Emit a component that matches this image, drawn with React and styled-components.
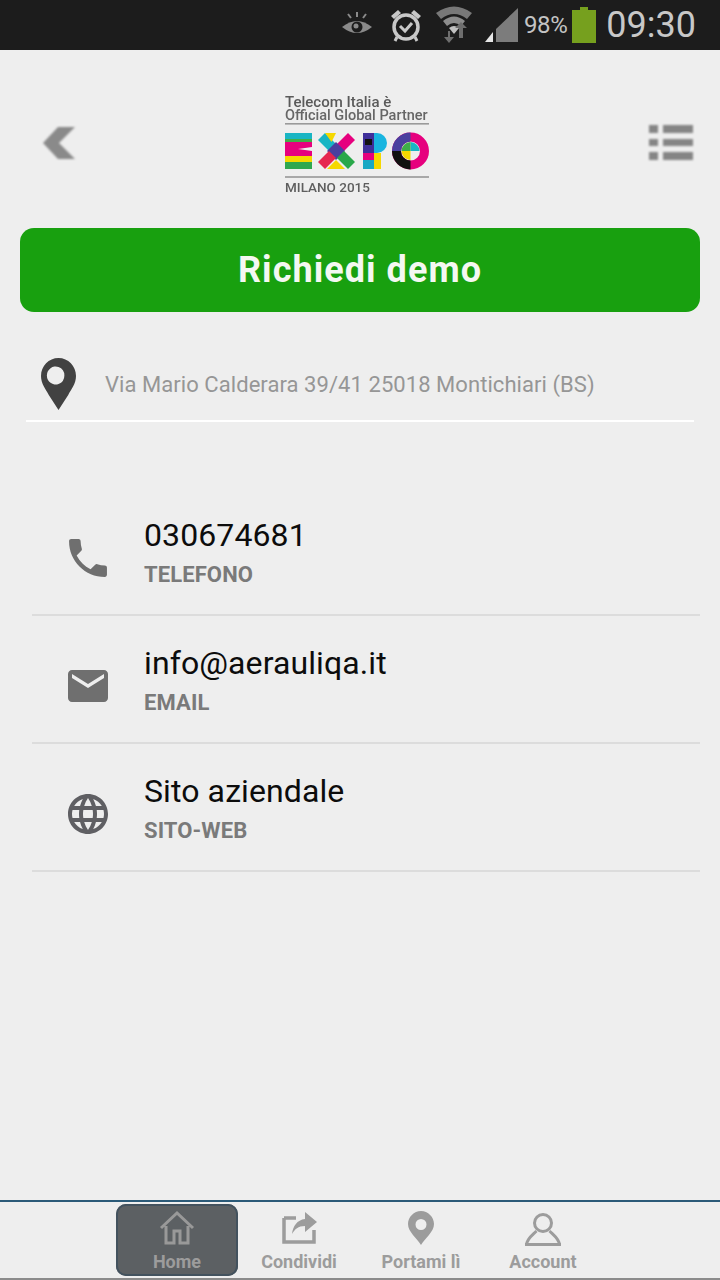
import React from "react";
import styled, { createGlobalStyle } from "styled-components";

const Global = createGlobalStyle`
  html, body { margin: 0; padding: 0; background: #eeeeee; }
  body { font-family: Roboto, "Noto Sans", sans-serif; }
`;

const Page = styled.div`
  width: 720px;
  height: 1280px;
  display: flex;
  flex-direction: column;
  background: #eeeeee;
  overflow: hidden;
`;

const StatusBar = styled.div`
  height: 50px;
  flex: none;
  background: #1c1c1c;
  display: flex;
  align-items: center;
  justify-content: flex-end;
  padding-right: 24px;
  box-sizing: border-box;
`;

const StatusIcon = styled.svg`
  display: block;
  flex: none;
  margin-right: ${(p) => p.$gap || 0}px;
`;

const Percent = styled.span`
  font-size: 24px;
  color: #c4c4c4;
  margin-right: 5px;
  letter-spacing: -0.4px;
`;

const Clock = styled.span`
  font-size: 36px;
  font-weight: 400;
  color: #c8c8c8;
  margin-left: 10px;
  line-height: 50px;
`;

const Header = styled.header`
  height: 178px;
  flex: none;
  box-sizing: border-box;
  display: flex;
  align-items: center;
  justify-content: space-between;
  padding: 8px 26px 0 42px;
`;

const Logo = styled.svg`
  display: block;
  filter: blur(0.7px);
  margin-right: 8px;
`;

const BlurIcon = styled.svg`
  display: block;
  filter: blur(1px);
`;

const DemoButton = styled.button`
  display: block;
  flex: none;
  margin: 0 20px;
  width: 680px;
  height: 84px;
  border: 0;
  border-radius: 14px;
  background: #18a00f;
  color: #f4f8f2;
  font-family: Roboto, sans-serif;
  font-weight: 700;
  font-size: 36px;
  letter-spacing: 1.05px;
`;

const Address = styled.div`
  flex: none;
  margin: 0 26px;
  height: 110px;
  box-sizing: border-box;
  border-bottom: 2px solid #ffffff;
  display: flex;
  align-items: center;
  gap: 29px;
  padding: 35px 0 0 15px;
`;

const PinIcon = styled.svg`
  display: block;
  flex: none;
`;

const AddressText = styled.span`
  font-size: 22px;
  color: #969696;
  letter-spacing: 0.06px;
  padding-top: 2px;
`;

const ContactList = styled.div`
  flex: none;
  margin: 66px 20px 0 32px;
  display: flex;
  flex-direction: column;
`;

const ContactRow = styled.div`
  height: 128px;
  box-sizing: border-box;
  border-bottom: 2px solid #dcdcdc;
  display: flex;
  align-items: center;
  padding: 0 0 0 36px;
`;

const ContactIcon = styled.svg`
  display: block;
  flex: none;
  margin: 14px 36px 0 0;
`;

const ContactText = styled.div`
  display: flex;
  flex-direction: column;
  gap: 8px;
  margin-top: 1px;
`;

const ContactValue = styled.span`
  font-size: 32px;
  line-height: 38px;
  color: #0c0c0c;
  letter-spacing: 0.1px;
`;

const ContactLabel = styled.span`
  font-size: 22px;
  line-height: 26px;
  font-weight: 700;
  color: #7a7a7a;
  letter-spacing: 0.1px;
`;

const Spacer = styled.div`
  flex: 1;
`;

const BottomNav = styled.nav`
  flex: none;
  height: 80px;
  box-sizing: border-box;
  border-top: 2px solid #2b5a78;
  border-bottom: 2px solid #8b8b8b;
  display: flex;
  align-items: center;
  padding-left: 116px;
`;

const NavItem = styled.div`
  width: 122px;
  height: 72px;
  box-sizing: border-box;
  display: flex;
  flex-direction: column;
  align-items: center;
  border-radius: 10px;
  padding-top: 6px;
  background: ${(p) => (p.$active ? "#5c6063" : "transparent")};
  box-shadow: ${(p) => (p.$active ? "inset 0 0 0 2px #43525e" : "none")};
`;

const NavIcon = styled.svg`
  display: block;
  flex: none;
`;

const NavLabel = styled.span`
  font-size: 18px;
  line-height: 22px;
  font-weight: 700;
  color: #9c9c9c;
  margin-top: 5px;
`;

const EyeIcon = () => (
  <StatusIcon $gap={17} width="32" height="26" viewBox="0 0 32 26">
    <path d="M1 15 Q16 3 31 15 Q16 27 1 15Z" fill="#8a8a8a" />
    <circle cx="16" cy="15" r="5.5" fill="#1c1c1c" />
    <circle cx="15" cy="14" r="2.5" fill="#8a8a8a" />
    <path d="M16 0v5M7 2l3 4M25 2l-3 4" stroke="#8a8a8a" strokeWidth="2" />
  </StatusIcon>
);

const AlarmIcon = () => (
  <StatusIcon $gap={14} width="32" height="36" viewBox="0 0 32 36">
    <circle cx="16" cy="20" r="12" fill="none" stroke="#c8c8c8" strokeWidth="3.5" />
    <path d="M10 19l5 5 7-8" fill="none" stroke="#c8c8c8" strokeWidth="3" />
    <path d="M1 9l7-6 3 3-7 6zM31 9l-7-6-3 3 7 6z" fill="#c8c8c8" />
    <path d="M7 30l-2 4M25 30l2 4" stroke="#c8c8c8" strokeWidth="3" />
  </StatusIcon>
);

const WifiIcon = () => (
  <StatusIcon $gap={13} width="36" height="38" viewBox="0 0 36 38">
    <path d="M0 7 Q18 -6 36 7 L31 13 Q18 3 5 13Z" fill="#787878" />
    <path d="M7 15 Q18 6 29 15 L25 20 Q18 14 11 20Z" fill="#8c8c8c" />
    <path d="M13 22 Q18 18 23 22 L18 28Z" fill="#c0c0c0" />
    <path d="M12 25v6h-4l5 6 5-6h-4v-6z" fill="#6e6e6e" />
    <path d="M23 32v-10h-4l6-6 6 6h-4v10z" fill="#6e6e6e" />
  </StatusIcon>
);

const SignalIcon = () => (
  <StatusIcon $gap={5} width="34" height="34" viewBox="0 0 34 34">
    <path d="M11 21L33 0v34H11z" fill="#7c7c7c" />
    <path d="M8 24v10H0z" fill="#e6e6e6" />
  </StatusIcon>
);

const BatteryIcon = () => (
  <StatusIcon width="24" height="36" viewBox="0 0 24 36">
    <path d="M8 0h8v3h8v33H0V3h8z" fill="#76a01e" />
  </StatusIcon>
);

const ExpoLogo = () => (
  <Logo width="150" height="104" viewBox="283 92 150 104">
    <text x="285" y="107.500" fontFamily="Roboto" fontSize="15" fontWeight="500" fill="#5a5a5a">Telecom Italia è</text>
    <text x="285" y="121" fontFamily="Roboto" fontSize="14.5" fontWeight="500" fill="#666666">Official Global Partner</text>
    <rect x="285" y="124" width="144" height="1.6" fill="#9a9a9a" />
    <rect x="285" y="134" width="27" height="6" fill="#19b5c4" />
    <rect x="285" y="140" width="27" height="3" fill="#3fae49" />
    <path d="M285 143h27v5l-14 2 14 2v5h-27z" fill="#e6007e" />
    <rect x="285" y="157" width="27" height="6" fill="#f5d800" />
    <rect x="285" y="163" width="27" height="7" fill="#2fa84f" />
    <path d="M318 141l7-7 11 11-7 7z" fill="#19b5c4" />
    <path d="M355 141l-7-7-11 11 7 7z" fill="#e6007e" />
    <path d="M325 134h11l-4.500 9z" fill="#f5d800" />
    <path d="M336 143l9 9-9 9-9-9z" fill="#4a3f9f" />
    <path d="M318 163l7 7 11-11-7-7z" fill="#e6264f" />
    <path d="M355 163l-7 7-11-11 7-7z" fill="#29a84a" />
    <path d="M327 170l9-9 9 9z" fill="#f5d800" />
    <rect x="363" y="134" width="11" height="20" fill="#3f2f9a" />
    <rect x="363" y="154" width="11" height="7" fill="#e6007e" />
    <rect x="363" y="161" width="11" height="9" fill="#19a8c4" />
    <rect x="374" y="154" width="7" height="16" fill="#f5d800" />
    <path d="M374 134h3a10 10 0 0 1 0 20h-3z" fill="#19b5e0" />
    <rect x="365" y="140" width="7" height="6" fill="#111111" />
    <circle cx="410.500" cy="152" r="14" fill="none" stroke="#e6007e" strokeWidth="9" />
    <path d="M410.500 133.500a18.500 18.500 0 0 0-18.500 18.500h9a9.500 9.500 0 0 1 9.500-9.500z" fill="#4a3f9f" />
    <path d="M392 152a18.500 18.500 0 0 0 18.500 18.500v-9a9.500 9.500 0 0 1-9.500-9.500z" fill="#111111" />
    <path d="M410.500 143a9 9 0 0 1 9 9h-9z" fill="#19b5c4" />
    <path d="M401.500 152a9 9 0 0 1 9-9v9z" fill="#3fae49" />
    <path d="M410.500 161a9 9 0 0 1-9-9h9z" fill="#f5d800" />
    <rect x="285" y="177" width="144" height="2" fill="#a8a8a8" />
    <text x="285" y="192.500" fontFamily="Roboto" fontSize="13.5" fontWeight="500" fill="#5e5e5e">MILANO 2015</text>
  </Logo>
);

const rows = [
  {
    value: "030674681",
    label: "TELEFONO",
    icon: (
      <ContactIcon width="40" height="40" viewBox="2.500 2.500 19 19">
        <path d="M6.62 10.79c1.44 2.83 3.76 5.14 6.59 6.59l2.2-2.2c.27-.27.67-.36 1.02-.24 1.12.37 2.33.57 3.57.57.55 0 1 .45 1 1V20c0 .55-.45 1-1 1-9.39 0-17-7.61-17-17 0-.55.45-1 1-1h3.5c.55 0 1 .45 1 1 0 1.25.2 2.45.57 3.57.11.35.03.74-.25 1.02l-2.2 2.2z" fill="#6f6f6f" />
      </ContactIcon>
    ),
  },
  {
    value: "info@aerauliqa.it",
    label: "EMAIL",
    icon: (
      <ContactIcon width="40" height="40" viewBox="2 2 20 20">
        <path d="M20 4H4c-1.100 0-1.990.9-1.990 2L2 18c0 1.100.9 2 2 2h16c1.100 0 2-.9 2-2V6c0-1.100-.9-2-2-2zm0 4l-8 5-8-5V6l8 5 8-5v2z" fill="#6f6f6f" />
      </ContactIcon>
    ),
  },
  {
    value: "Sito aziendale",
    label: "SITO-WEB",
    icon: (
      <ContactIcon width="40" height="40" viewBox="2 2 20 20">
        <path d="M11.990 2C6.470 2 2 6.480 2 12s4.470 10 9.990 10C17.520 22 22 17.520 22 12S17.520 2 11.990 2zm6.930 6h-2.950c-.32-1.250-.78-2.450-1.380-3.560 1.840.63 3.370 1.910 4.330 3.560zM12 4.040c.83 1.200 1.480 2.530 1.910 3.960h-3.820c.43-1.430 1.080-2.760 1.910-3.960zM4.260 14C4.100 13.360 4 12.690 4 12s.1-1.360.26-2h3.380c-.08.66-.14 1.320-.14 2 0 .68.06 1.340.14 2H4.260zm.82 2h2.950c.32 1.250.78 2.450 1.380 3.560-1.840-.63-3.370-1.900-4.330-3.560zm2.950-8H5.080c.96-1.660 2.490-2.930 4.330-3.560C8.810 5.550 8.350 6.750 8.030 8zM12 19.960c-.83-1.200-1.480-2.530-1.910-3.960h3.820c-.43 1.430-1.080 2.760-1.910 3.960zM14.340 14H9.660c-.09-.66-.16-1.320-.16-2 0-.68.07-1.350.16-2h4.680c.09.65.16 1.320.16 2 0 .68-.07 1.340-.16 2zm.25 5.560c.6-1.110 1.060-2.310 1.380-3.560h2.950c-.96 1.650-2.490 2.930-4.330 3.560zM16.360 14c.08-.66.14-1.320.14-2 0-.68-.06-1.340-.14-2h3.380c.16.64.26 1.310.26 2s-.1 1.360-.26 2h-3.380z" fill="#5f5f63" />
      </ContactIcon>
    ),
  },
];

export default function App() {
  return (
    <Page>
      <Global />
      <StatusBar>
        <EyeIcon />
        <AlarmIcon />
        <WifiIcon />
        <SignalIcon />
        <Percent>98%</Percent>
        <BatteryIcon />
        <Clock>09:30</Clock>
      </StatusBar>
      <Header>
        <BlurIcon width="34" height="34" viewBox="0 0 34 34">
          <path d="M16 1h17L17 17l16 16H16L1 17z" fill="#8a8a8a" />
        </BlurIcon>
        <ExpoLogo />
        <BlurIcon width="46" height="38" viewBox="0 0 46 38">
          <path d="M1 1h9v8H1zM15 1h30v8H15zM1 15h9v7H1zM15 15h30v7H15zM1 28h9v8H1zM15 28h30v8H15z" fill="#858585" />
        </BlurIcon>
      </Header>
      <DemoButton>Richiedi demo</DemoButton>
      <Address>
        <PinIcon width="35" height="52" viewBox="0 0 36 52" preserveAspectRatio="none">
          <path fillRule="evenodd" d="M18 0c10 0 18 8 18 18 0 8-5 13-8 19L18 52 8 37C5 31 0 26 0 18 0 8 8 0 18 0zm0 9a9 9 0 1 0 0 17 9 9 0 0 0 0-17z" fill="#424242" />
        </PinIcon>
        <AddressText>Via Mario Calderara 39/41 25018 Montichiari (BS)</AddressText>
      </Address>
      <ContactList>
        {rows.map((r) => (
          <ContactRow key={r.label}>
            {r.icon}
            <ContactText>
              <ContactValue>{r.value}</ContactValue>
              <ContactLabel>{r.label}</ContactLabel>
            </ContactText>
          </ContactRow>
        ))}
      </ContactList>
      <Spacer />
      <BottomNav>
        <NavItem $active>
          <NavIcon width="36" height="36" viewBox="0 0 36 36" fill="none" stroke="#999999" strokeWidth="3">
            <path d="M2 18L18 3l16 15M7 16v17h8V21h6v12h8V16" />
          </NavIcon>
          <NavLabel>Home</NavLabel>
        </NavItem>
        <NavItem>
          <NavIcon width="36" height="36" viewBox="0 0 36 36">
            <path d="M3 8h12M3 8v24h30V20" fill="none" stroke="#9c9c9c" strokeWidth="3.500" />
            <path d="M24 2l12 10-12 10v-6c-7 0-10 3-13 8 1-8 5-14 13-15z" fill="#9c9c9c" />
          </NavIcon>
          <NavLabel>Condividi</NavLabel>
        </NavItem>
        <NavItem>
          <NavIcon width="36" height="36" viewBox="0 0 36 36">
            <path fillRule="evenodd" d="M18 1c7 0 13 6 13 13 0 8-9 14-13 21C14 28 5 22 5 14 5 7 11 1 18 1zm0 8a5.500 5.500 0 1 0 0 11 5.500 5.500 0 0 0 0-11z" fill="#9c9c9c" />
          </NavIcon>
          <NavLabel>Portami lì</NavLabel>
        </NavItem>
        <NavItem>
          <NavIcon width="36" height="36" viewBox="0 0 36 36" fill="none" stroke="#9c9c9c" strokeWidth="3">
            <circle cx="18" cy="13" r="8.500" />
            <path d="M1.500 35c0-6 6-10 10-14M34.500 35c0-6-6-10-10-14M0 34.500h36" />
          </NavIcon>
          <NavLabel>Account</NavLabel>
        </NavItem>
      </BottomNav>
    </Page>
  );
}
